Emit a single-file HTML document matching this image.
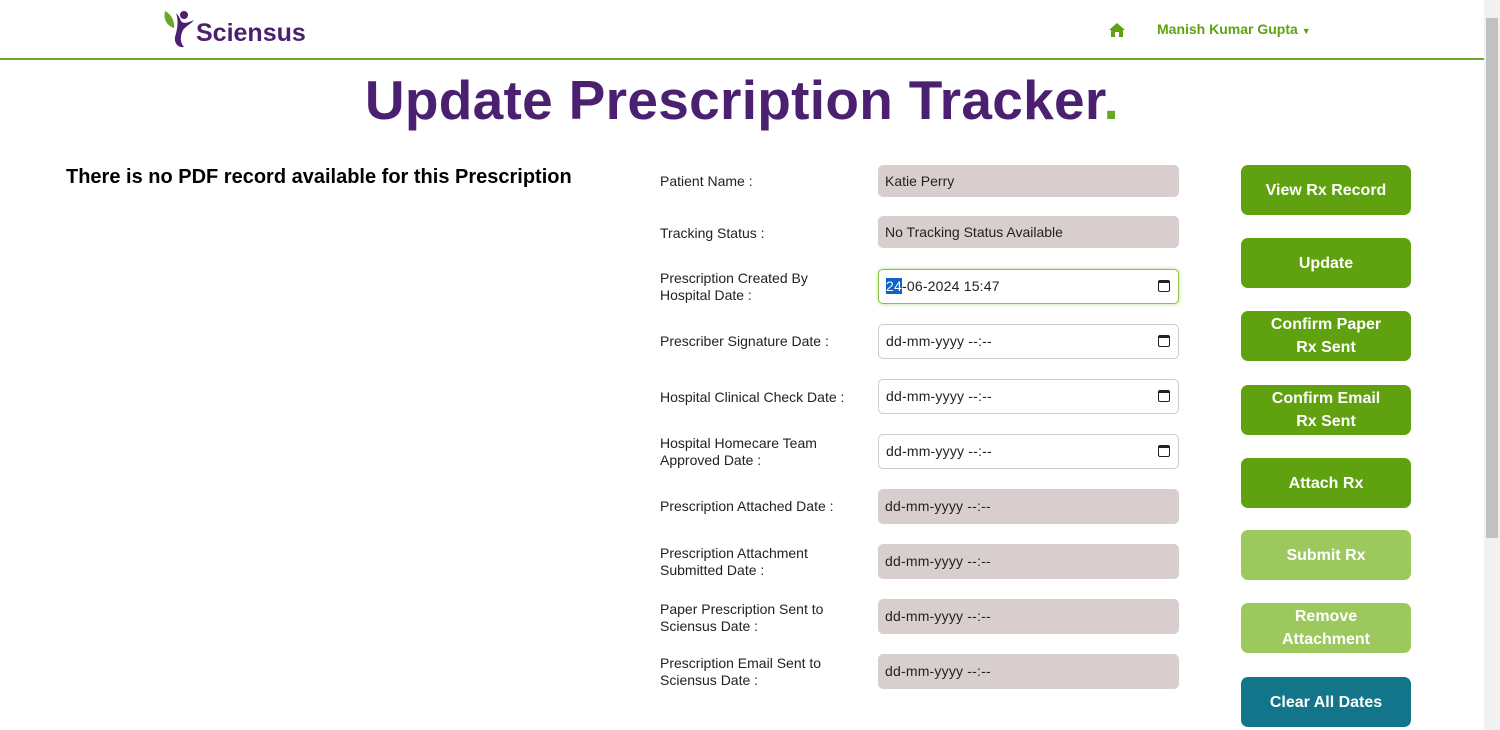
<!DOCTYPE html>
<html><head><style>
*{box-sizing:border-box;margin:0;padding:0}
body{width:1500px;height:730px;overflow:hidden;background:#fff;font-family:"Liberation Sans",sans-serif;position:relative}
.hdr{position:absolute;left:0;top:0;width:1484px;height:60px;border-bottom:2px solid #6aa628}
.sb{position:absolute;right:0;top:0;width:16px;height:730px;background:#f1f1f1}
.sb .th{position:absolute;left:2px;top:18px;width:12px;height:520px;background:#c1c1c1}
.title{position:absolute;top:68px;left:0;width:1484px;text-align:center;font-size:55px;font-weight:bold;color:#4b2070;letter-spacing:0.3px}
.title span{color:#6aa628}
.nopdf{position:absolute;left:66px;top:166px;font-size:20px;font-weight:bold;color:#000}
.lbl{position:absolute;left:660px;font-size:14px;color:#222;line-height:17px;width:210px}
.inp{position:absolute;left:878px;width:301px;height:35px;border-radius:5px;font-size:14px;padding-left:7px;line-height:35px;color:#222}
.ro{background:#d8cece}
.ed{background:#fff;border:1px solid #ccc;line-height:33px;padding-left:7px}
.ed .cal{position:absolute;right:8px;top:10px;width:12px;height:12px;border:1.5px solid #222;border-top-width:3px;border-radius:2px}
.dt{font-size:14px;letter-spacing:0.2px}
.btn{position:absolute;left:1241px;width:170px;height:50px;border-radius:7px;background:#5fa10f;color:#fff;font-weight:bold;font-size:16px;display:flex;align-items:center;justify-content:center;text-align:center;line-height:23px}
.lt{background:#9cc85e}
.tl{background:#12758a}
</style></head><body>
<div class="hdr">
<svg style="position:absolute;left:163px;top:9px" width="32" height="40" viewBox="0 0 32 40">
<path d="M2 2 C0 10 4 17 11 19 C12 12 8 5 2 2Z" fill="#6aa628"/>
<circle cx="21" cy="6" r="4" fill="#4b2070"/>
<path d="M13 4 C16 12 14 22 12 28 C11 34 15 39 21 38 C17 34 17 27 20 21 C23 17 28 15 31 11 C25 14 20 15 18 12 C17 9 15 6 13 4Z" fill="#4b2070"/>
</svg>
<div style="position:absolute;left:196px;top:19px;font-size:25px;font-weight:bold;color:#4b2070">Sciensus</div>
<svg style="position:absolute;left:1109px;top:23px" width="16" height="14" viewBox="0 0 16 14"><path d="M8 0 L16 7 L14 7 L14 14 L10 14 L10 9 L6 9 L6 14 L2 14 L2 7 L0 7Z" fill="#5fa10f"/></svg>
<div style="position:absolute;left:1157px;top:21px;font-size:14px;font-weight:bold;color:#5fa10f">Manish Kumar Gupta <span style="font-size:9px">▼</span></div>
</div>
<div class="sb"><div class="th"></div></div>
<div class="title">Update Prescription Tracker<span>.</span></div>
<div class="nopdf">There is no PDF record available for this Prescription</div>

<div class="lbl" style="top:173px">Patient Name :</div>
<div class="inp ro" style="top:165px;height:32px;line-height:32px">Katie Perry</div>
<div class="lbl" style="top:225px">Tracking Status :</div>
<div class="inp ro" style="top:216px;height:32px;line-height:32px">No Tracking Status Available</div>
<div class="lbl" style="top:270px">Prescription Created By<br>Hospital Date :</div>
<div class="inp ed dt" style="top:269px;border:1px solid #8cc04a;box-shadow:0 0 4px #b8dd8c"><span style="background:#0a64c8;color:#fff">24</span>-06-2024 15:47<div class="cal"></div></div>
<div class="lbl" style="top:333px">Prescriber Signature Date :</div>
<div class="inp ed dt" style="top:324px">dd-mm-yyyy --:--<div class="cal"></div></div>
<div class="lbl" style="top:389px">Hospital Clinical Check Date :</div>
<div class="inp ed dt" style="top:379px">dd-mm-yyyy --:--<div class="cal"></div></div>
<div class="lbl" style="top:435px">Hospital Homecare Team<br>Approved Date :</div>
<div class="inp ed dt" style="top:434px">dd-mm-yyyy --:--<div class="cal"></div></div>
<div class="lbl" style="top:498px">Prescription Attached Date :</div>
<div class="inp ro dt" style="top:489px">dd-mm-yyyy --:--</div>
<div class="lbl" style="top:545px">Prescription Attachment<br>Submitted Date :</div>
<div class="inp ro dt" style="top:544px">dd-mm-yyyy --:--</div>
<div class="lbl" style="top:601px">Paper Prescription Sent to<br>Sciensus Date :</div>
<div class="inp ro dt" style="top:599px">dd-mm-yyyy --:--</div>
<div class="lbl" style="top:655px">Prescription Email Sent to<br>Sciensus Date :</div>
<div class="inp ro dt" style="top:654px">dd-mm-yyyy --:--</div>

<div class="btn" style="top:165px">View Rx Record</div>
<div class="btn" style="top:238px">Update</div>
<div class="btn" style="top:311px">Confirm Paper<br>Rx Sent</div>
<div class="btn" style="top:385px">Confirm Email<br>Rx Sent</div>
<div class="btn" style="top:458px">Attach Rx</div>
<div class="btn lt" style="top:530px">Submit Rx</div>
<div class="btn lt" style="top:603px">Remove<br>Attachment</div>
<div class="btn tl" style="top:677px">Clear All Dates</div>
</body></html>
